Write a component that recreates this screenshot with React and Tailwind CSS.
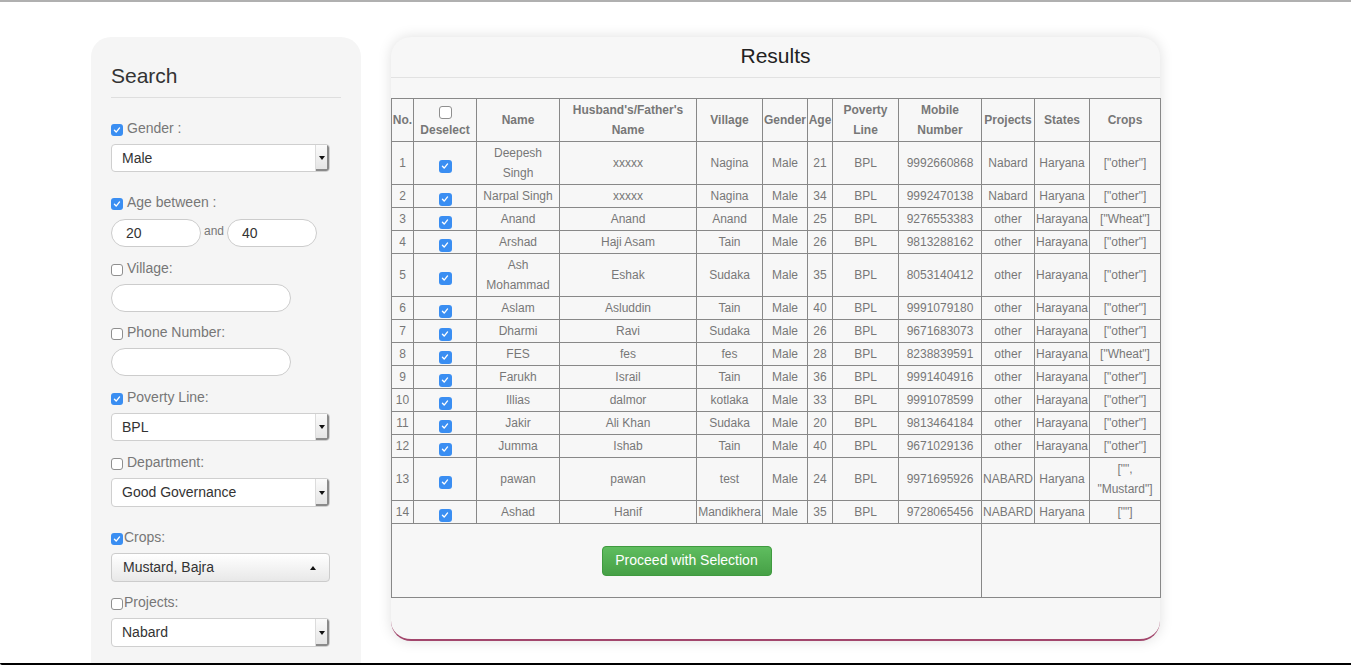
import React from 'react'

const rows = [
  ['1', 'Deepesh\nSingh', 'xxxxx', 'Nagina', 'Male', '21', 'BPL', '9992660868', 'Nabard', 'Haryana', '["other"]'],
  ['2', 'Narpal Singh', 'xxxxx', 'Nagina', 'Male', '34', 'BPL', '9992470138', 'Nabard', 'Haryana', '["other"]'],
  ['3', 'Anand', 'Anand', 'Anand', 'Male', '25', 'BPL', '9276553383', 'other', 'Harayana', '["Wheat"]'],
  ['4', 'Arshad', 'Haji Asam', 'Tain', 'Male', '26', 'BPL', '9813288162', 'other', 'Harayana', '["other"]'],
  ['5', 'Ash\nMohammad', 'Eshak', 'Sudaka', 'Male', '35', 'BPL', '8053140412', 'other', 'Harayana', '["other"]'],
  ['6', 'Aslam', 'Asluddin', 'Tain', 'Male', '40', 'BPL', '9991079180', 'other', 'Harayana', '["other"]'],
  ['7', 'Dharmi', 'Ravi', 'Sudaka', 'Male', '26', 'BPL', '9671683073', 'other', 'Harayana', '["other"]'],
  ['8', 'FES', 'fes', 'fes', 'Male', '28', 'BPL', '8238839591', 'other', 'Harayana', '["Wheat"]'],
  ['9', 'Farukh', 'Israil', 'Tain', 'Male', '36', 'BPL', '9991404916', 'other', 'Harayana', '["other"]'],
  ['10', 'Illias', 'dalmor', 'kotlaka', 'Male', '33', 'BPL', '9991078599', 'other', 'Harayana', '["other"]'],
  ['11', 'Jakir', 'Ali Khan', 'Sudaka', 'Male', '20', 'BPL', '9813464184', 'other', 'Harayana', '["other"]'],
  ['12', 'Jumma', 'Ishab', 'Tain', 'Male', '40', 'BPL', '9671029136', 'other', 'Harayana', '["other"]'],
  ['13', 'pawan', 'pawan', 'test', 'Male', '24', 'BPL', '9971695926', 'NABARD', 'Haryana', '["",\n"Mustard"]'],
  ['14', 'Ashad', 'Hanif', 'Mandikhera', 'Male', '35', 'BPL', '9728065456', 'NABARD', 'Haryana', '[""]'],
]

const colWidths = [22, 63, 83, 137, 66, 45, 25, 66, 83, 53, 55, 71]

function Box({ on, small }) {
  const size = small ? 'h-[12px] w-[12px]' : 'h-[13px] w-[13px]'
  if (on) {
    return (
      <span className={`inline-flex shrink-0 items-center justify-center rounded-[3px] bg-[#3a8ef2] ${size}`}>
        <svg viewBox="0 0 10 10" className="h-[8px] w-[8px]">
          <path d="M1.8 5.4 L4 7.6 L8.2 2.4" stroke="white" strokeWidth="1.7" fill="none" strokeLinecap="round" strokeLinejoin="round" />
        </svg>
      </span>
    )
  }
  return <span className={`inline-block shrink-0 rounded-[3px] border border-[#8f8f8f] bg-white ${size}`} />
}

function Label({ on, text, tight, mt }) {
  return (
    <div className={`flex items-center text-[14px] leading-[20px] text-[#777] ${mt}`}>
      <span className="mt-[3px] flex">
        <Box on={on} small />
      </span>
      <span className={tight ? 'ml-px' : 'ml-[4px]'}>{text}</span>
    </div>
  )
}

function Select({ value, mt, h = 'h-[28px]' }) {
  return (
    <div className={`flex w-[219px] overflow-hidden rounded-[4px] border border-[#cfcfcf] bg-white ${h} ${mt}`}>
      <div className="flex flex-1 items-center pl-[10px] text-[14px] text-[#333]">{value}</div>
      <div className="flex w-[14px] items-center justify-center border-l border-[#dcdcdc] bg-[linear-gradient(180deg,#fbfbfb,#e3e3e3)] shadow-[inset_-2px_-2px_0_#8a8a8a]">
        <svg viewBox="0 0 6 4" className="h-[4px] w-[6px] -translate-x-px">
          <path d="M0 0 H6 L3 4 Z" fill="#111" />
        </svg>
      </div>
    </div>
  )
}

function Pill({ value, w, mt }) {
  return (
    <div className={`flex h-[28px] items-center rounded-full border border-[#cccccc] bg-white pl-[14px] text-[14px] text-[#333] ${w} ${mt}`}>
      {value}
    </div>
  )
}

function SearchPanel() {
  return (
    <div className="h-[640px] w-[270px] shrink-0 rounded-t-[20px] bg-[#f5f5f5] px-[20px] pt-[24px]">
      <h2 className="text-[21px] leading-[30px] text-[#333]">Search</h2>
      <div className="mt-[6px] h-px bg-[#dedede]" />

      <Label on text="Gender :" mt="mt-[20px]" />
      <Select value="Male" mt="mt-[6px]" />

      <Label on text="Age between :" mt="mt-[20px]" />
      <div className="mt-[7px] flex items-center">
        <Pill value="20" w="w-[90px]" />
        <span className="mx-[3px] -translate-y-[2px] text-[12px] text-[#777]">and</span>
        <Pill value="40" w="w-[90px]" />
      </div>

      <Label text="Village:" mt="mt-[11px]" />
      <Pill w="w-[180px]" mt="mt-[6px]" />

      <Label text="Phone Number:" mt="mt-[10px]" />
      <Pill w="w-[180px]" mt="mt-[6px]" />

      <Label on text="Poverty Line:" mt="mt-[11px]" />
      <Select value="BPL" mt="mt-[6px]" />

      <Label text="Department:" mt="mt-[11px]" />
      <Select value="Good Governance" mt="mt-[6px]" h="h-[29px]" />

      <Label on tight text="Crops:" mt="mt-[20px]" />
      <div className="mt-[6px] flex h-[29px] w-[219px] items-center justify-between rounded-[4px] border border-[#cccccc] bg-[linear-gradient(180deg,#ffffff,#e8e8e8)] pl-[11px] pr-[13px] text-[14px] text-[#333]">
        <span>Mustard, Bajra</span>
        <svg viewBox="0 0 6 4" className="h-[4px] w-[6px]">
          <path d="M0 4 H6 L3 0 Z" fill="#111" />
        </svg>
      </div>

      <Label tight text="Projects:" mt="mt-[10px]" />
      <Select value="Nabard" mt="mt-[6px]" h="h-[29px]" />
    </div>
  )
}

function ResultsPanel() {
  const th = 'border border-[#888] px-0 py-px text-[12px] font-bold leading-[20px] text-[#777] whitespace-pre align-middle'
  const td = 'border border-[#888] px-0 py-px text-[12px] leading-[20px] text-[#777] whitespace-pre text-center align-middle'
  const heads = ['No.', null, 'Name', "Husband's/Father's\nName", 'Village', 'Gender', 'Age', 'Poverty\nLine', 'Mobile\nNumber', 'Projects', 'States', 'Crops']

  return (
    <div className="w-[769px] shrink-0 rounded-[20px] border-b-2 border-[#a2466c] bg-[#f7f7f7] pb-[41px] pt-[4px] shadow-[0_0_14px_rgba(0,0,0,0.13)]">
      <h2 className="text-center text-[21px] leading-[30px] text-[#222]">Results</h2>
      <div className="mt-[6px] h-px bg-[#e2e2e2]" />
      <table className="mt-[20px] w-[769px] table-fixed border-collapse">
        <colgroup>
          {colWidths.map((w, i) => (
            <col key={i} style={{ width: w }} />
          ))}
        </colgroup>
        <thead>
          <tr>
            {heads.map((h, i) =>
              h === null ? (
                <th key={i} className={th}>
                  <div className="flex flex-col items-center pt-[5px]">
                    <Box />
                    <span className="mt-px leading-[20px]">Deselect</span>
                  </div>
                </th>
              ) : (
                <th key={i} className={th}>{h}</th>
              )
            )}
          </tr>
        </thead>
        <tbody>
          {rows.map((r) => (
            <tr key={r[0]}>
              <td className={td}>{r[0]}</td>
              <td className={td}>
                <div className="flex justify-center pt-[6px]">
                  <Box on />
                </div>
              </td>
              {r.slice(1).map((c, i) => (
                <td key={i} className={td}>{c}</td>
              ))}
            </tr>
          ))}
          <tr>
            <td colSpan={9} className="h-[74px] border border-[#888] text-center align-middle">
              <button className="h-[30px] w-[170px] rounded-[4px] border border-[#3f9a3f] bg-[linear-gradient(180deg,#5fbd5f,#46a046)] text-[14px] text-white">
                Proceed with Selection
              </button>
            </td>
            <td colSpan={3} className="border border-[#888]" />
          </tr>
        </tbody>
      </table>
    </div>
  )
}

export default function App() {
  return (
    <div className="flex h-[665px] flex-col overflow-hidden bg-white font-['Liberation_Sans',Arial,sans-serif]">
      <div className="h-[2px] shrink-0 bg-[#b0b0b0]" />
      <div className="flex flex-1 items-start gap-[30px] overflow-hidden pl-[91px] pt-[35px]">
        <SearchPanel />
        <ResultsPanel />
      </div>
      <div className="h-[2px] shrink-0 rounded-bl-[3px] bg-black" />
    </div>
  )
}
